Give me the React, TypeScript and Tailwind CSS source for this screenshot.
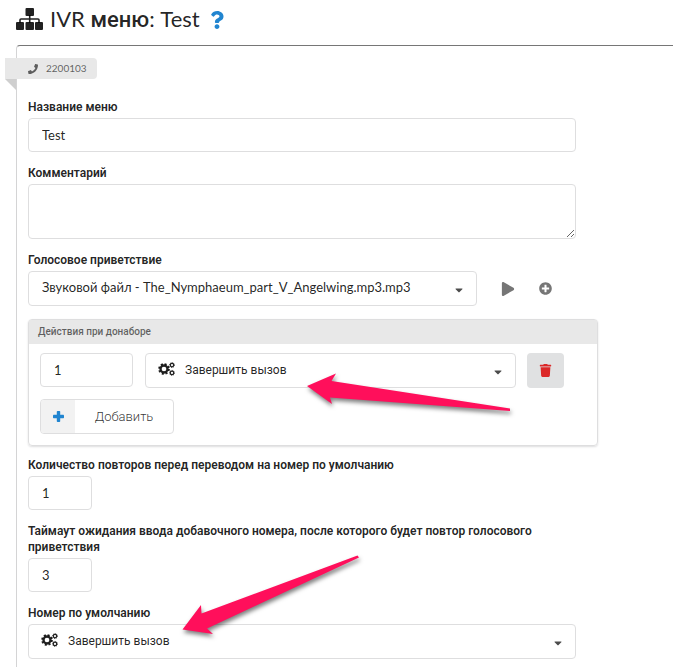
import { useState } from "react";
import type { ReactNode } from "react";
import {
  FaCaretDown,
  FaPhone,
  FaPlay,
  FaPlusCircle,
  FaQuestion,
  FaTrash,
} from "react-icons/fa";

const inputClass =
  "block h-[34px] rounded border border-[#dededf] bg-white px-[13px] text-[13px] text-black/87 outline-none focus:border-[#85b7d9]";

function SitemapIcon() {
  return (
    <svg className="mt-1 mr-[7px] h-[22px] w-[27px] shrink-0" viewBox="0 0 27 22" fill="currentColor">
      <rect x="9.5" y="0" width="8.500" height="8" rx="1" />
      <rect x="0" y="14" width="8" height="8" rx="1" />
      <rect x="9.5" y="14" width="8.500" height="8" rx="1" />
      <rect x="19" y="14" width="8" height="8" rx="1" />
      <path
        d="M13.700 7V15M4 15V12Q4 11 5 11H22Q23 11 23 12V15"
        fill="none"
        stroke="currentColor"
        strokeWidth="1.6"
      />
    </svg>
  );
}

// One big gear and two small ones, teeth are dashed circles
function CogsIcon() {
  return (
    <svg
      className="h-[14px] w-[17px]"
      viewBox="0 0 17 14"
      fill="none"
      stroke="currentColor"
    >
      <circle cx="6" cy="7" r="3.500" strokeWidth="2.300" />
      <circle cx="6" cy="7" r="5" strokeWidth="1.700" strokeDasharray="2.100 1.827" />
      <circle cx="14" cy="3.100" r="1.700" strokeWidth="1.200" />
      <circle cx="14" cy="3.100" r="2.500" strokeWidth="0.800" strokeDasharray="1 0.963" />
      <circle cx="14" cy="10.900" r="1.700" strokeWidth="1.200" />
      <circle cx="14" cy="10.900" r="2.500" strokeWidth="0.800" strokeDasharray="1 0.963" />
    </svg>
  );
}

function PlusIcon() {
  return (
    <svg className="size-[11px]" viewBox="0 0 11 11" fill="currentColor">
      <rect x="0" y="3.800" width="11" height="3.400" rx="0.700" />
      <rect x="3.800" y="0" width="3.400" height="11" rx="0.700" />
    </svg>
  );
}

type FieldProps = {
  id: string;
  label: string;
  children: ReactNode;
};

function Field({ id, label, children }: FieldProps) {
  return (
    <div className="mb-[13px]">
      <label
        htmlFor={id}
        className="mb-[3px] block font-['Roboto',sans-serif] text-[12px] leading-4 font-semibold"
      >
        {label}
      </label>
      {children}
    </div>
  );
}

type DropdownProps = {
  id: string;
  options: string[];
  icon?: ReactNode;
  ariaLabel?: string;
};

function Dropdown({ id, options, icon, ariaLabel }: DropdownProps) {
  return (
    <div className="relative w-full">
      {icon && (
        <span className="pointer-events-none absolute inset-y-0 left-[13px] flex items-center pb-[3px]">
          {icon}
        </span>
      )}
      <select
        id={id}
        aria-label={ariaLabel}
        className={`block h-[35px] w-full appearance-none rounded border border-[#dededf] bg-white pr-8 pb-[2px] text-black/87 outline-none ${
          icon ? "pl-[39px] font-['Roboto',sans-serif] text-[12px]" : "pl-[13px] text-[13px]"
        }`}
      >
        {options.map((option) => (
          <option key={option}>{option}</option>
        ))}
      </select>
      <FaCaretDown className="pointer-events-none absolute top-[13px] right-3 size-3 text-black/70" />
    </div>
  );
}

export default function App() {
  const [name, setName] = useState("Test");
  const [comment, setComment] = useState("");
  const [repeats, setRepeats] = useState("1");
  const [timeout, setTimeoutValue] = useState("3");
  const [digit, setDigit] = useState("1");

  return (
    <div className="flex min-h-screen flex-col overflow-hidden bg-white pl-4 font-['Lato','Roboto',sans-serif] text-black/87">
      {/* Page title */}
      <header className="flex h-[45px] items-start pt-1">
        <SitemapIcon />
        <h1 className="text-[22px] leading-[30px]">
          IVR <span className="font-['Roboto',sans-serif] font-medium">меню</span>: Test
        </h1>
        <a href="#help" aria-label="Help" className="mt-[7px] ml-2 text-[#2185d0]">
          <FaQuestion className="size-[18px]" />
        </a>
      </header>

      <main className="grow rounded-tl border-t border-l border-t-[#767676] border-l-[#d4d4d5] pt-3 pl-[11px]">
        {/* Ribbon with the extension number */}
        <div className="relative -ml-[23px] flex h-[21px] w-[92px] items-center rounded-r bg-[#e8e8e8] pl-[23px] text-[10px] text-black/60">
          <FaPhone className="mr-2 size-[10px]" />
          2200103
          <span className="absolute top-full left-0 border-t-[11px] border-l-[11px] border-t-[#cfcfcf] border-l-transparent" />
        </div>

        <form className="mt-5 max-w-[570px]" onSubmit={(e) => e.preventDefault()}>
          <div className="mr-[22px]">
            <Field id="name" label="Название меню">
              <input
                id="name"
                type="text"
                className={`${inputClass} w-full`}
                value={name}
                onChange={(e) => setName(e.target.value)}
              />
            </Field>
            <Field id="comment" label="Комментарий">
              <textarea
                id="comment"
                className="block h-[55px] w-full resize-y rounded border border-[#dededf] px-[13px] py-2 text-[13px] outline-none"
                value={comment}
                onChange={(e) => setComment(e.target.value)}
              />
            </Field>
            <Field id="greeting" label="Голосовое приветствие">
              <div className="flex items-center">
                <Dropdown
                  id="greeting"
                  options={["Звуковой файл - The_Nymphaeum_part_V_Angelwing.mp3.mp3"]}
                />
                <div className="flex w-[99px] shrink-0 items-center gap-6 pl-6 text-[#767676]">
                  <button type="button" aria-label="Play">
                    <FaPlay className="size-[14px]" />
                  </button>
                  <button type="button" aria-label="Add file">
                    <FaPlusCircle className="size-[13px]" />
                  </button>
                </div>
              </div>
            </Field>
          </div>

          {/* Actions */}
          <section className="relative mb-[11px] rounded border border-[#dededf] shadow-[0_1px_2px_0_rgba(34,36,38,0.15)]">
            <h2 className="bg-[#e8e8e8] px-[9px] font-['Roboto',sans-serif] text-[10px] leading-6 font-medium text-black/60">
              Действия при донаборе
            </h2>
            <div className="px-[11px] pt-[9px] pb-[11px]">
              <div className="mb-[11px] flex pr-[22px]">
                <input
                  type="text"
                  aria-label="Добавочный номер"
                  className={`${inputClass} mr-3 w-[93px] shrink-0`}
                  value={digit}
                  onChange={(e) => setDigit(e.target.value)}
                />
                <Dropdown
                  id="action"
                  ariaLabel="Действие"
                  icon={<CogsIcon />}
                  options={["Завершить вызов"]}
                />
                <button
                  type="button"
                  aria-label="Удалить"
                  className="ml-[11px] flex h-[35px] w-[37px] shrink-0 items-center justify-center rounded bg-[#e0e1e2] text-[#db2828]"
                >
                  <FaTrash className="size-[13px]" />
                </button>
              </div>
              <button
                type="button"
                className="flex h-[35px] w-[134px] items-center overflow-hidden rounded border border-[#dededf] font-['Roboto',sans-serif] text-[13px] font-light text-black/80"
              >
                <span className="flex h-full w-[34px] items-center justify-center bg-[#f2f2f2] text-[#2185d0]">
                  <PlusIcon />
                </span>
                <span className="grow text-center">Добавить</span>
              </button>
            </div>
            <svg
              className="pointer-events-none absolute top-[50px] left-[273px] h-12 w-[216px] drop-shadow-[1px_3px_2px_rgba(0,0,0,0.5)]"
              viewBox="302 370 216 48"
              fill="#ff0f5b"
            >
              <path d="M307 386 336 373.500 331.500 381 510 408.500V411L330 397.500 332 404Z" />
            </svg>
          </section>

          <div className="mr-[22px]">
            <Field id="repeats" label="Количество повторов перед переводом на номер по умолчанию">
              <input
                id="repeats"
                type="text"
                className={`${inputClass} w-16`}
                value={repeats}
                onChange={(e) => setRepeats(e.target.value)}
              />
            </Field>
            <Field
              id="timeout"
              label="Таймаут ожидания ввода добавочного номера, после которого будет повтор голосового приветствия"
            >
              <input
                id="timeout"
                type="text"
                className={`${inputClass} w-16`}
                value={timeout}
                onChange={(e) => setTimeoutValue(e.target.value)}
              />
            </Field>
            <div className="relative">
              <Field id="fallback" label="Номер по умолчанию">
                <Dropdown
                  id="fallback"
                  icon={<CogsIcon />}
                  options={["Завершить вызов"]}
                />
              </Field>
              <svg
                className="pointer-events-none absolute -top-[55px] left-[149px] h-[92px] w-[190px] drop-shadow-[1px_3px_2px_rgba(0,0,0,0.5)]"
                viewBox="177 550 190 92"
                fill="#ff0f5b"
              >
                <path d="M182.500 629.500 201 605 201.500 613.500 357.500 555.500 359 557.500 207 628.500 213 634Z" />
              </svg>
            </div>
          </div>
        </form>
      </main>
    </div>
  );
}
